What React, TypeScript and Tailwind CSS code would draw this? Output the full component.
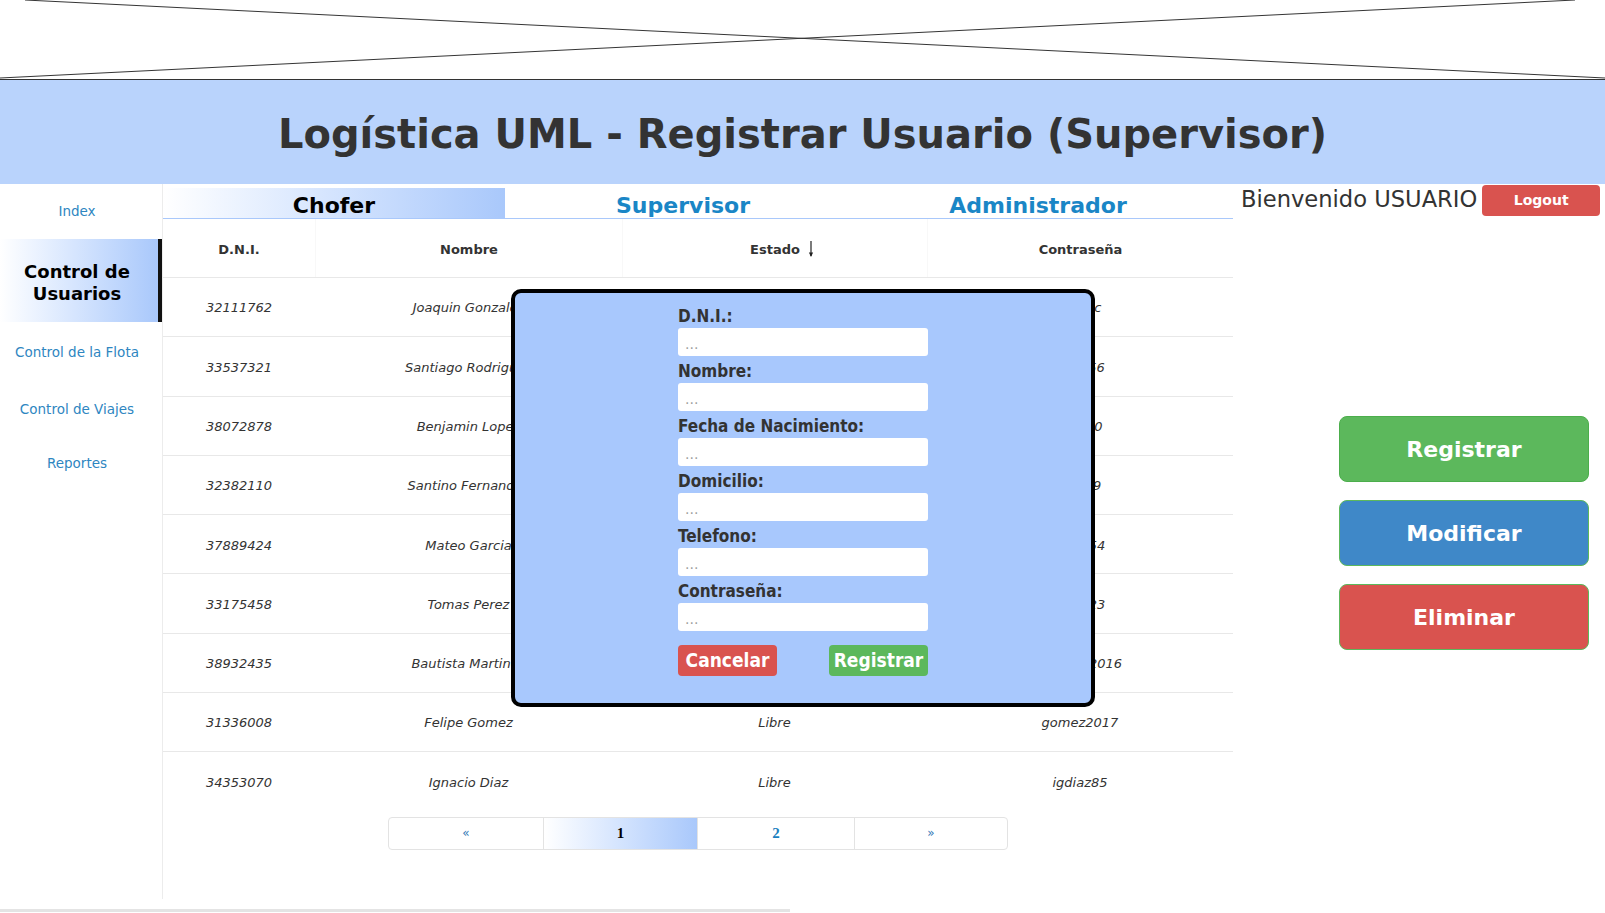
import React from "react";

interface IFila {
    dni: string;
    nombre: string;
    estado: string;
    clave: string;
}

const filas: IFila[] = [
    { dni: "32111762", nombre: "Joaquin Gonzalez", estado: "Libre", clave: "joaabc" },
    { dni: "33537321", nombre: "Santiago Rodriguez", estado: "Ocupado", clave: "123456" },
    { dni: "38072878", nombre: "Benjamin Lopez", estado: "Libre", clave: "bl1990" },
    { dni: "32382110", nombre: "Santino Fernandez", estado: "Libre", clave: "fern99" },
    { dni: "37889424", nombre: "Mateo Garcia", estado: "Ocupado", clave: "mat654" },
    { dni: "33175458", nombre: "Tomas Perez", estado: "Libre", clave: "tom123" },
    { dni: "38932435", nombre: "Bautista Martinez", estado: "Libre", clave: "bmartin2016" },
    { dni: "31336008", nombre: "Felipe Gomez", estado: "Libre", clave: "gomez2017" },
    { dni: "34353070", nombre: "Ignacio Diaz", estado: "Libre", clave: "igdiaz85" },
];

const campos = ["D.N.I.:", "Nombre:", "Fecha de Nacimiento:", "Domicilio:", "Telefono:", "Contraseña:"];

const cond = "font-['DejaVu_Sans_Condensed','DejaVu_Sans',sans-serif]";

function Sidebar() {
    return (
        <aside className="w-[163px] shrink-0 border-r border-[#ececec] text-[13.5px] text-[#2e86c1]">
            <div className="h-[55px] flex items-center justify-center pr-[8px]">Index</div>
            <div className="h-[83px] flex items-center justify-center text-center pr-[4px] pt-[4px] border-r-4 border-[#111] bg-gradient-to-r from-white to-[#a9c8fb] text-[18px] font-bold leading-[22px] text-black">
                Control de
                <br />
                Usuarios
            </div>
            <div className="h-[60px] flex items-center justify-center pr-[8px]">Control de la Flota</div>
            <div className="h-[55px] flex items-center justify-center pr-[8px]">Control de Viajes</div>
            <div className="h-[52px] flex items-center justify-center pr-[8px]">Reportes</div>
        </aside>
    );
}

function Modal() {
    return (
        <div className="absolute left-[348px] top-[105px] w-[584px] h-[418px] border-4 border-black rounded-[10px] bg-[#a8c8fd] flex justify-center pt-[8px]">
            <form className="w-[250px]">
                {campos.map((c) => (
                    <div key={c}>
                        <label className={`block h-[27px] pt-[3px] leading-[24px] text-[17px] font-bold text-[#333] ${cond}`}>{c}</label>
                        <input
                            placeholder="..."
                            className="block w-full h-[28px] rounded-[3px] bg-white px-[7px] pt-[4px] text-[14px] placeholder:text-[#a0a0a0] outline-none"
                        />
                    </div>
                ))}
                <div className="flex justify-between mt-[14px]">
                    <button type="button" className={`w-[99px] h-[31px] rounded-[4px] bg-[#d9534f] text-white text-[19px] font-bold ${cond}`}>
                        Cancelar
                    </button>
                    <button type="button" className={`w-[99px] h-[31px] rounded-[4px] bg-[#5cb85c] text-white text-[19px] font-bold ${cond}`}>
                        Registrar
                    </button>
                </div>
            </form>
        </div>
    );
}

function Tabla() {
    return (
        <main className="w-[1070px] shrink-0 relative">
            <div className="flex pt-[4px] border-b border-[#a9c8fb]">
                <div className="w-[342px] h-[30px] flex items-center justify-center pt-[5px] bg-gradient-to-r from-white to-[#a9c8fb] text-[22px] font-bold text-black">
                    Chofer
                </div>
                <div className="w-[350px] ml-[3px] h-[30px] flex items-center justify-center pt-[5px] text-[22px] font-bold text-[#1a86c6]">
                    Supervisor
                </div>
                <div className="w-[350px] ml-[5px] h-[30px] flex items-center justify-center pt-[5px] text-[22px] font-bold text-[#1a86c6]">
                    Administrador
                </div>
            </div>
            <div className="grid grid-cols-[152px_307px_305px_306px] h-[58px] items-center text-center text-[13px] font-bold text-[#333]">
                <div className="h-full flex items-center justify-center pt-[3px]">D.N.I.</div>
                <div className="h-full flex items-center justify-center pt-[3px] border-l border-[#f8f8f8]">Nombre</div>
                <div className="h-full flex items-center justify-center pt-[3px] border-l border-[#f8f8f8]">
                    <span className="relative">
                        Estado
                        <svg className="absolute left-[calc(100%+8px)] top-[0px]" width="6" height="18" viewBox="0 0 6 18">
                            <path d="M3 1 V16" stroke="#222" strokeWidth="1.2" />
                            <path d="M0.9 12.5 L3 17 L5.1 12.5 Z" fill="#222" />
                        </svg>
                    </span>
                </div>
                <div className="h-full flex items-center justify-center pt-[3px] border-l border-[#f8f8f8]">Contraseña</div>
            </div>
            {filas.map((f) => (
                <div
                    key={f.dni}
                    className="grid grid-cols-[152px_307px_305px_306px] h-[59.3px] items-center text-center pt-[2px] border-t border-[#e8e8e8] text-[13px] italic text-[#333]"
                >
                    <div>{f.dni}</div>
                    <div>{f.nombre}</div>
                    <div>{f.estado}</div>
                    <div>{f.clave}</div>
                </div>
            ))}
            <div className="flex justify-center mt-[6px]">
                <div className="flex h-[33px] border border-[#e3e3e3] rounded-[4px] text-[13px]">
                    <div className="w-[154px] flex items-center justify-center text-[#337ab7] text-[12px]">«</div>
                    <div className="w-[154px] flex items-center justify-center border-l border-[#e3e3e3] bg-gradient-to-r from-white to-[#a9c8fb] font-['Liberation_Serif',serif] font-bold text-[15px] text-black">
                        1
                    </div>
                    <div className="w-[157px] flex items-center justify-center border-l border-[#e3e3e3] font-['Liberation_Serif',serif] font-bold text-[15px] text-[#1a7fc0]">
                        2
                    </div>
                    <div className="w-[153px] flex items-center justify-center border-l border-[#e3e3e3] text-[#337ab7] text-[12px]">»</div>
                </div>
            </div>
            <Modal />
        </main>
    );
}

function PanelDerecho() {
    return (
        <section className="flex-1 flex flex-col">
            <div className="flex items-start pl-[8px] pt-[1px]">
                <span className="text-[22.6px] leading-[28px] text-[#333]">Bienvenido USUARIO</span>
                <button className="ml-[5px] w-[118px] h-[31px] rounded-[4px] bg-[#d9534f] text-white text-[14px] font-bold">
                    Logout
                </button>
            </div>
            <div className="flex flex-col items-end pr-[16px] mt-[200px] gap-[18px]">
                <button className="w-[250px] h-[66px] rounded-[8px] bg-[#5cb85c] border border-[#4cae4c] text-white text-[22px] font-bold">
                    Registrar
                </button>
                <button className="w-[250px] h-[66px] rounded-[8px] bg-[#3f88c8] border border-[#5cb85c] text-white text-[22px] font-bold">
                    Modificar
                </button>
                <button className="w-[250px] h-[66px] rounded-[8px] bg-[#d9534f] border border-[#5cb85c] text-white text-[22px] font-bold">
                    Eliminar
                </button>
            </div>
        </section>
    );
}

export default function App() {
    return (
        <div className="w-[1605px] h-[913px] overflow-hidden bg-white font-['DejaVu_Sans',sans-serif]">
            <div className="h-[80px] border-b border-[#333]">
                <svg className="w-full h-full" viewBox="0 0 1605 80" preserveAspectRatio="none">
                    <line x1="25" y1="0" x2="1605" y2="79" stroke="#333" strokeWidth="1" />
                    <line x1="0" y1="79" x2="1575" y2="0" stroke="#333" strokeWidth="1" />
                </svg>
            </div>
            <header className="h-[104px] bg-[#b9d3fc] flex items-center justify-center pt-[4px]">
                <h1 className="text-[40px] font-bold text-[#333]">Logística UML - Registrar Usuario (Supervisor)</h1>
            </header>
            <div className="flex h-[715px]">
                <Sidebar />
                <Tabla />
                <PanelDerecho />
            </div>
            <div className="mt-[10px] w-[790px] h-[3px] bg-[#e4e4e4]" />
        </div>
    );
}
